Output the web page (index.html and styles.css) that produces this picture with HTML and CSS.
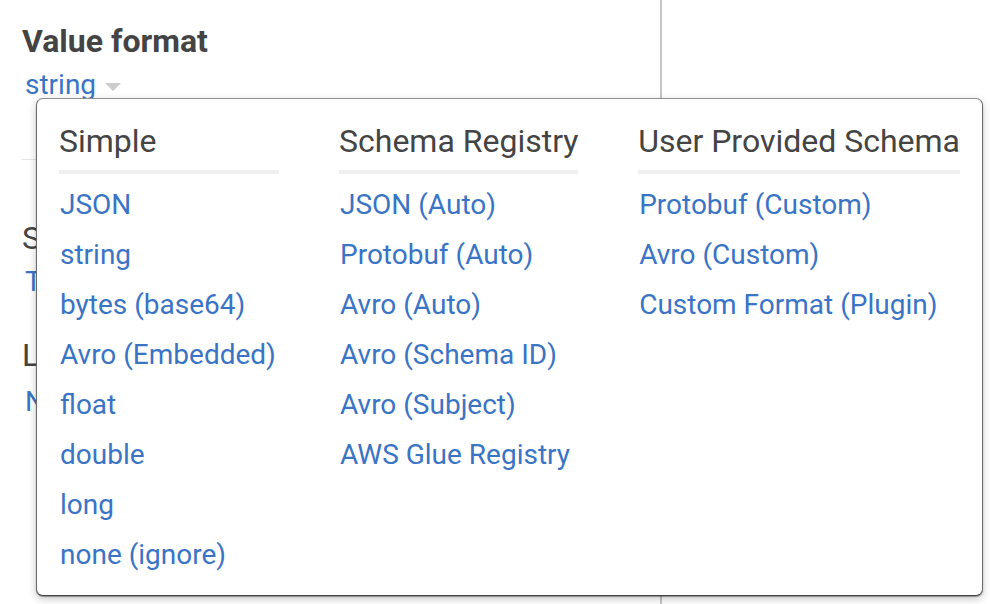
FILE: index.html
```html
<!DOCTYPE html>
<html>
<head>
<meta charset="utf-8">
<link rel="stylesheet" href="styles.css">
</head>
<body>
<div class="page">
  <div class="left">
    <div class="field first">
      <div class="label">Value format</div>
      <div class="value">string<span class="caret"></span></div>
    </div>
    <div class="divider"></div>
    <div class="field second">
      <div class="label">Subject name strategy</div>
      <div class="value">TopicNameStrategy</div>
    </div>
    <div class="field third">
      <div class="label">Limit</div>
      <div class="value">None</div>
    </div>
  </div>
  <div class="right"></div>

  <div class="dropdown">
    <div class="col col-first">
      <div class="col-head">Simple</div>
      <ul class="items">
        <li>JSON</li>
        <li>string</li>
        <li>bytes (base64)</li>
        <li>Avro (Embedded)</li>
        <li>float</li>
        <li>double</li>
        <li>long</li>
        <li>none (ignore)</li>
      </ul>
    </div>
    <div class="col col-mid">
      <div class="col-head">Schema Registry</div>
      <ul class="items">
        <li>JSON (Auto)</li>
        <li>Protobuf (Auto)</li>
        <li>Avro (Auto)</li>
        <li>Avro (Schema ID)</li>
        <li>Avro (Subject)</li>
        <li>AWS Glue Registry</li>
      </ul>
    </div>
    <div class="col col-last">
      <div class="col-head">User Provided Schema</div>
      <ul class="items">
        <li>Protobuf (Custom)</li>
        <li>Avro (Custom)</li>
        <li>Custom Format (Plugin)</li>
      </ul>
    </div>
  </div>
</div>
</body>
</html>
```

FILE: styles.css
```css
html, body {
  margin: 0;
  padding: 0;
  background: #ffffff;
}
body {
  font-family: Roboto, "Noto Sans", Arial, sans-serif;
  color: #444444;
  width: 990px;
  height: 604px;
  overflow: hidden;
}
.page {
  position: relative;
  display: flex;
  height: 604px;
}
.left {
  width: 638px;
  padding-left: 22px;
  border-right: 2px solid #c6c6c6;
}
.right {
  flex: 1;
}
.label {
  font-size: 32px;
  line-height: 40px;
  color: #444444;
  white-space: nowrap;
}
.first .label {
  font-weight: 700;
}
.value {
  font-size: 28px;
  line-height: 36px;
  color: #3a74c5;
  padding-left: 3px;
  display: flex;
  align-items: center;
  white-space: nowrap;
}
.first {
  padding-top: 21px;
}
.first .value {
  margin-top: 6px;
}
.caret {
  display: inline-block;
  width: 0;
  height: 0;
  border-left: 8px solid transparent;
  border-right: 8px solid transparent;
  border-top: 8px solid #cccccc;
  margin-left: 9px;
  margin-top: 4px;
}
.divider {
  margin-top: 56px;
  height: 1px;
  background: #e6e6e6;
}
.second {
  margin-top: 58px;
}
.second .value {
  margin-top: 6px;
}
.third {
  margin-top: 35px;
}
.third .value {
  margin-top: 9px;
}

.dropdown {
  position: absolute;
  left: 36px;
  top: 98px;
  width: 901px;
  padding: 22px 22px 15px 22px;
  background: #ffffff;
  border: 1px solid #8e8e8e;
  border-left-color: #6a6a6a;
  border-right-color: #6a6a6a;
  border-bottom-color: #444444;
  border-radius: 7px;
  box-shadow: 0 1px 1px rgba(0,0,0,0.35), 0 3px 9px rgba(0,0,0,0.22);
  display: flex;
}
.col {
  flex: none;
}
.col-first {
  min-width: 220px;
}
.col-mid {
  margin-left: 60px;
}
.col-last {
  margin-left: auto;
}
.col-head {
  font-size: 32px;
  line-height: 40px;
  color: #444444;
  padding-bottom: 9px;
  border-bottom: 4px solid #efefef;
  white-space: nowrap;
}
.items {
  list-style: none;
  margin: 6px 0 0 0;
  padding: 0;
}
.items li {
  font-size: 28px;
  line-height: 50px;
  height: 50px;
  color: #3a74c5;
  padding-left: 1px;
  white-space: nowrap;
}
```
